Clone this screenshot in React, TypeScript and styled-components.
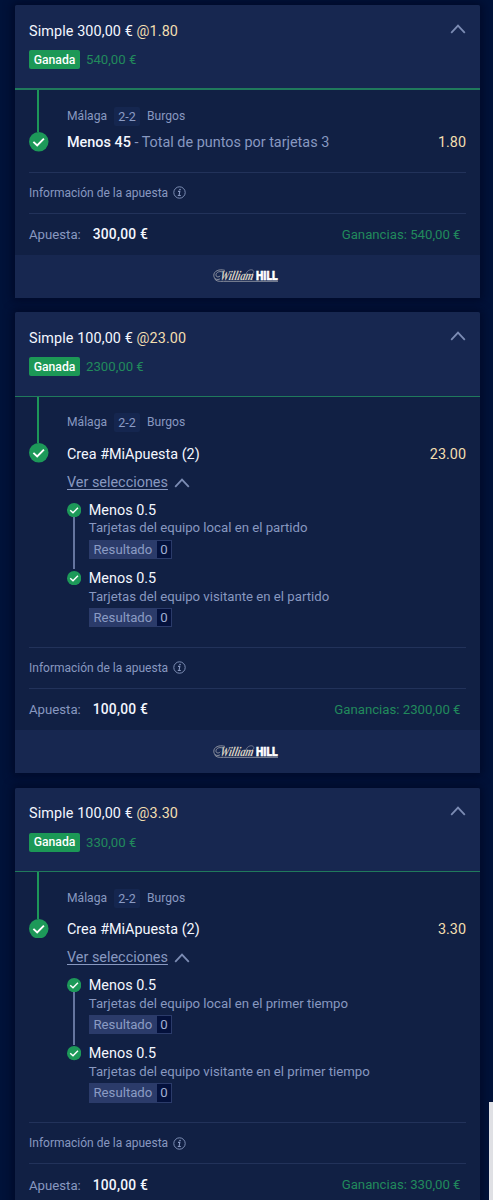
import React from "react";
import styled, { createGlobalStyle } from "styled-components";

const Global = createGlobalStyle`
  * { box-sizing: border-box; }
  html, body { margin: 0; padding: 0; }
  body {
    background: #001239;
    font-family: Roboto, "Liberation Sans", sans-serif;
    color: #fff;
    overflow: hidden;
  }
`;

const Page = styled.main`
  height: 1200px;
  padding: 5px 13px 0 15px;
  overflow: hidden;
  display: flex;
  flex-direction: column;
  gap: 14.3px;
`;

const Card = styled.article`
  flex: none;
  background: #112044;
  border-radius: 2px 2px 0 0;
  box-shadow: 0 0 8px 3px rgba(0, 8, 36, 0.75);
  overflow: hidden;
`;

const Header = styled.header<{ $line: number }>`
  height: ${(p) => 83 + p.$line}px;
  padding: 14px 14px 0;
  background: #172750;
  border-bottom: ${(p) => p.$line}px solid #207a5c;
  display: flex;
  justify-content: space-between;
`;

const Chevron = styled.svg<{ $top: number }>`
  display: block;
  flex: none;
  width: 16px;
  height: 10px;
  margin-top: ${(p) => p.$top}px;
  fill: none;
  stroke: #7c8cb4;
  stroke-width: 1.8;
`;

const Line = styled.div<{ $height: number }>`
  height: ${(p) => p.$height}px;
  display: flex;
  align-items: center;
  white-space: nowrap;
`;

const Text = styled.span<{ $size: number; $color?: string; $weight?: number; $track?: number }>`
  font-size: ${(p) => p.$size}px;
  color: ${(p) => p.$color ?? "#f4f7ff"};
  font-weight: ${(p) => p.$weight ?? 400};
  letter-spacing: ${(p) => p.$track ?? 0}px;
  white-space: pre;
`;

const Pair = styled.div<{ $gap?: number }>`
  display: flex;
  align-items: baseline;
  gap: ${(p) => p.$gap ?? 0}px;
`;

const WonTag = styled.span`
  height: 19px;
  width: 51px;
  margin-right: 6px;
  border-radius: 2px;
  background: #1c9856;
  display: flex;
  align-items: center;
  justify-content: center;
  font-size: 12.2px;
  font-weight: 500;
`;

const Selection = styled.section<{ $height: number }>`
  height: ${(p) => p.$height}px;
  margin: 0 14px;
  display: flex;
  border-bottom: 1px solid #22325a;
`;

const Rail = styled.div`
  width: 38px;
  flex: none;
  display: flex;
  flex-direction: column;
`;

const RailLine = styled.div<{ $height: number }>`
  height: ${(p) => p.$height}px;
  width: 2px;
  margin-left: 8.4px;
  background: #1d9659;
`;

const Content = styled.div`
  flex: 1;
  min-width: 0;
`;

const Teams = styled(Line)`
  margin-top: 15.6px;
`;

const Score = styled.span`
  width: 26px;
  height: 19px;
  margin: 1px 7px 0;
  border-radius: 2px;
  background: #15264f;
  color: #8b9bc4;
  font-size: 12.5px;
  display: flex;
  align-items: center;
  justify-content: center;
`;

const Spread = styled(Line)`
  justify-content: space-between;
`;

const Toggle = styled(Line)`
  gap: 6.5px;
  span {
    text-decoration: underline;
    text-underline-offset: 2px;
    text-decoration-thickness: 1px;
  }
`;

const Legs = styled.ul`
  list-style: none;
  margin: 12px 0 0;
  padding: 0;
`;

const Leg = styled.li`
  height: 68.3px;
  display: flex;
  gap: 7.5px;
`;

const LegRail = styled.div`
  width: 14.3px;
  padding-top: 1.5px;
  display: flex;
  flex-direction: column;
  align-items: center;
`;

const LegLine = styled.div`
  width: 2px;
  height: 54px;
  background: #65759f;
`;

const Result = styled.div`
  width: 83.5px;
  height: 19.5px;
  margin-top: 3px;
  border: 1px solid #2b3b6a;
  background: #2b3b6a;
  display: flex;
  align-items: stretch;
`;

const ResultLabel = styled.span`
  flex: 1;
  padding-left: 3.7px;
  color: #8b9bc4;
  font-size: 13.2px;
  line-height: 17px;
  white-space: nowrap;
`;

const ResultValue = styled.span`
  width: 14.5px;
  background: #04113c;
  color: #a0aed2;
  font-size: 13.2px;
  line-height: 17px;
  text-align: center;
`;

const Info = styled(Line)`
  margin: 0 14px;
  gap: 5px;
  border-bottom: 1px solid #22325a;
`;

const Stake = styled(Spread)`
  padding: 0 19.5px 0 14px;
`;

const Footer = styled.footer`
  height: 43.5px;
  padding-right: 4px;
  background: #172750;
  display: flex;
  align-items: center;
  justify-content: center;
`;

const ScrollThumb = styled.div`
  position: fixed;
  right: 0;
  top: 1102px;
  width: 4px;
  height: 98px;
  background: #dfe0e4;
`;

const muted = "#8898c0";
const green = "#218a5c";
const gold = "#f2deb0";

function Check({ size }: { size: number }) {
  return (
    <svg width={size} height={size} viewBox="0 0 20 20" style={{ display: "block", flex: "none" }}>
      <circle cx="10" cy="10" r="10" fill="#1d9959" />
      <path d="M4.5 10.1 8.4 13.7 15.3 6.8" fill="none" stroke="#fff" strokeWidth="2" />
    </svg>
  );
}

function Up({ top }: { top: number }) {
  return (
    <Chevron viewBox="0 0 16 10" $top={top}>
      <path d="M1.2 8.8 8 1.6l6.8 7.2" />
    </Chevron>
  );
}

function InfoIcon() {
  return (
    <svg width="13" height="13" viewBox="0 0 13 13" fill="none" stroke={muted}>
      <circle cx="6.5" cy="6.5" r="5.7" strokeWidth="0.9" />
      <path d="M5 5.4h1.8L6.1 9.4M4.8 9.5h3" strokeWidth="1.1" />
      <circle cx="7" cy="3.5" r="0.8" fill={muted} stroke="none" />
    </svg>
  );
}

function Logo() {
  return (
    <svg width="66" height="16" viewBox="0 0 66 16" overflow="visible">
      <path
        d="M12 2.4C6 .6.8 3.2.8 7.2c0 4 3.4 5.2 6.4 3.6M9.5 4C5.5 2.6 2.8 5 3 7.2c.2 2.2 3 2.2 4.2.6M1.5 10.5c1.5 3 5 3 9 2.8H65"
        fill="none"
        stroke="#a6a8b0"
        strokeWidth="0.8"
      />
      <path d="M33 6c1-3.6 5-5.2 7-3.7s0 4-1.8 4.4M36 10.5c2 1.5 4-.5 3.5-4" fill="none" stroke="#8f93a3" strokeWidth="0.7" />
      <g transform="translate(6.5 11.8) skewX(-12) scale(0.76 1)">
        <text fontFamily="Liberation Serif, serif" fontStyle="italic" fontWeight="700" fontSize="13.5" fill="#d6d0c2">
          William
        </text>
      </g>
      <g transform="translate(43 12.3) scale(0.77 1)">
        <text fontFamily="Roboto, sans-serif" fontWeight="900" fontSize="13.5" fill="#fff" stroke="#fff" strokeWidth="0.6">
          HILL
        </text>
      </g>
    </svg>
  );
}

interface Bet {
  stake: string;
  odds: string;
  won: string;
  pick: string;
  market?: string;
  legs: string[];
  branded?: boolean;
}

const bets: Bet[] = [
  {
    stake: "300,00 €",
    odds: "1.80",
    won: "540,00 €",
    pick: "Menos 45",
    market: "Total de puntos por tarjetas 3",
    legs: [],
    branded: true,
  },
  {
    stake: "100,00 €",
    odds: "23.00",
    won: "2300,00 €",
    pick: "Crea #MiApuesta (2)",
    legs: ["Tarjetas del equipo local en el partido", "Tarjetas del equipo visitante en el partido"],
    branded: true,
  },
  {
    stake: "100,00 €",
    odds: "3.30",
    won: "330,00 €",
    pick: "Crea #MiApuesta (2)",
    legs: ["Tarjetas del equipo local en el primer tiempo", "Tarjetas del equipo visitante en el primer tiempo"],
  },
];

function BetCard({ bet }: { bet: Bet }) {
  const combined = bet.legs.length > 0;
  return (
    <Card>
      <Header $line={combined ? 1.5 : 2}>
        <div>
          <Line $height={24}>
            <Text $size={14.4} $track={0.1}>{`Simple ${bet.stake} `}</Text>
            <Text $size={14.4} $track={0.1} $color={gold}>{`@${bet.odds}`}</Text>
          </Line>
          <Line $height={33}>
            <WonTag>Ganada</WonTag>
            <Text $size={13.2} $color={green}>{bet.won}</Text>
          </Line>
        </div>
        <Up top={4.5} />
      </Header>

      <Selection $height={combined ? 251 : 82.5}>
        <Rail>
          <RailLine $height={combined ? 46.5 : 42} />
          <Check size={19.5} />
        </Rail>
        <Content>
          <Teams $height={20}>
            <Text $size={12.1} $color={muted}>Málaga</Text>
            <Score>2-2</Score>
            <Text $size={12.1} $color={muted}>Burgos</Text>
          </Teams>
          <Spread $height={combined ? 43.8 : 33.4}>
            <Pair>
              <Text $size={14.4} $weight={combined ? 400 : 500}>{bet.pick}</Text>
              {bet.market && <Text $size={14.4} $color={muted}>{` - ${bet.market}`}</Text>}
            </Pair>
            <Text $size={14.4} $color={gold}>{bet.odds}</Text>
          </Spread>
          {combined && (
            <>
              <Toggle $height={13}>
                <Text $size={14.4} $color={muted}>Ver selecciones</Text>
                <Up top={0} />
              </Toggle>
              <Legs>
                {bet.legs.map((leg, i) => (
                  <Leg key={leg}>
                    <LegRail>
                      <Check size={14.3} />
                      {i < bet.legs.length - 1 && <LegLine />}
                    </LegRail>
                    <div>
                      <Line $height={18}>
                        <Text $size={14.4}>Menos 0.5</Text>
                      </Line>
                      <Line $height={17.5}>
                        <Text $size={13.2} $color={muted}>{leg}</Text>
                      </Line>
                      <Result>
                        <ResultLabel>Resultado</ResultLabel>
                        <ResultValue>0</ResultValue>
                      </Result>
                    </div>
                  </Leg>
                ))}
              </Legs>
            </>
          )}
        </Content>
      </Selection>

      <Info $height={41}>
        <Text $size={12} $color={muted}>Información de la apuesta</Text>
        <InfoIcon />
      </Info>
      <Stake $height={41}>
        <Pair $gap={12}>
          <Text $size={13.2} $color={muted}>Apuesta:</Text>
          <Text $size={13.8} $weight={500} $track={0.2}>{bet.stake}</Text>
        </Pair>
        <Text $size={13.2} $color={green}>{`Ganancias: ${bet.won}`}</Text>
      </Stake>
      {bet.branded && (
        <Footer>
          <Logo />
        </Footer>
      )}
    </Card>
  );
}

export default function App() {
  return (
    <>
      <Global />
      <Page>
        {bets.map((bet) => (
          <BetCard key={bet.odds} bet={bet} />
        ))}
      </Page>
      <ScrollThumb />
    </>
  );
}
